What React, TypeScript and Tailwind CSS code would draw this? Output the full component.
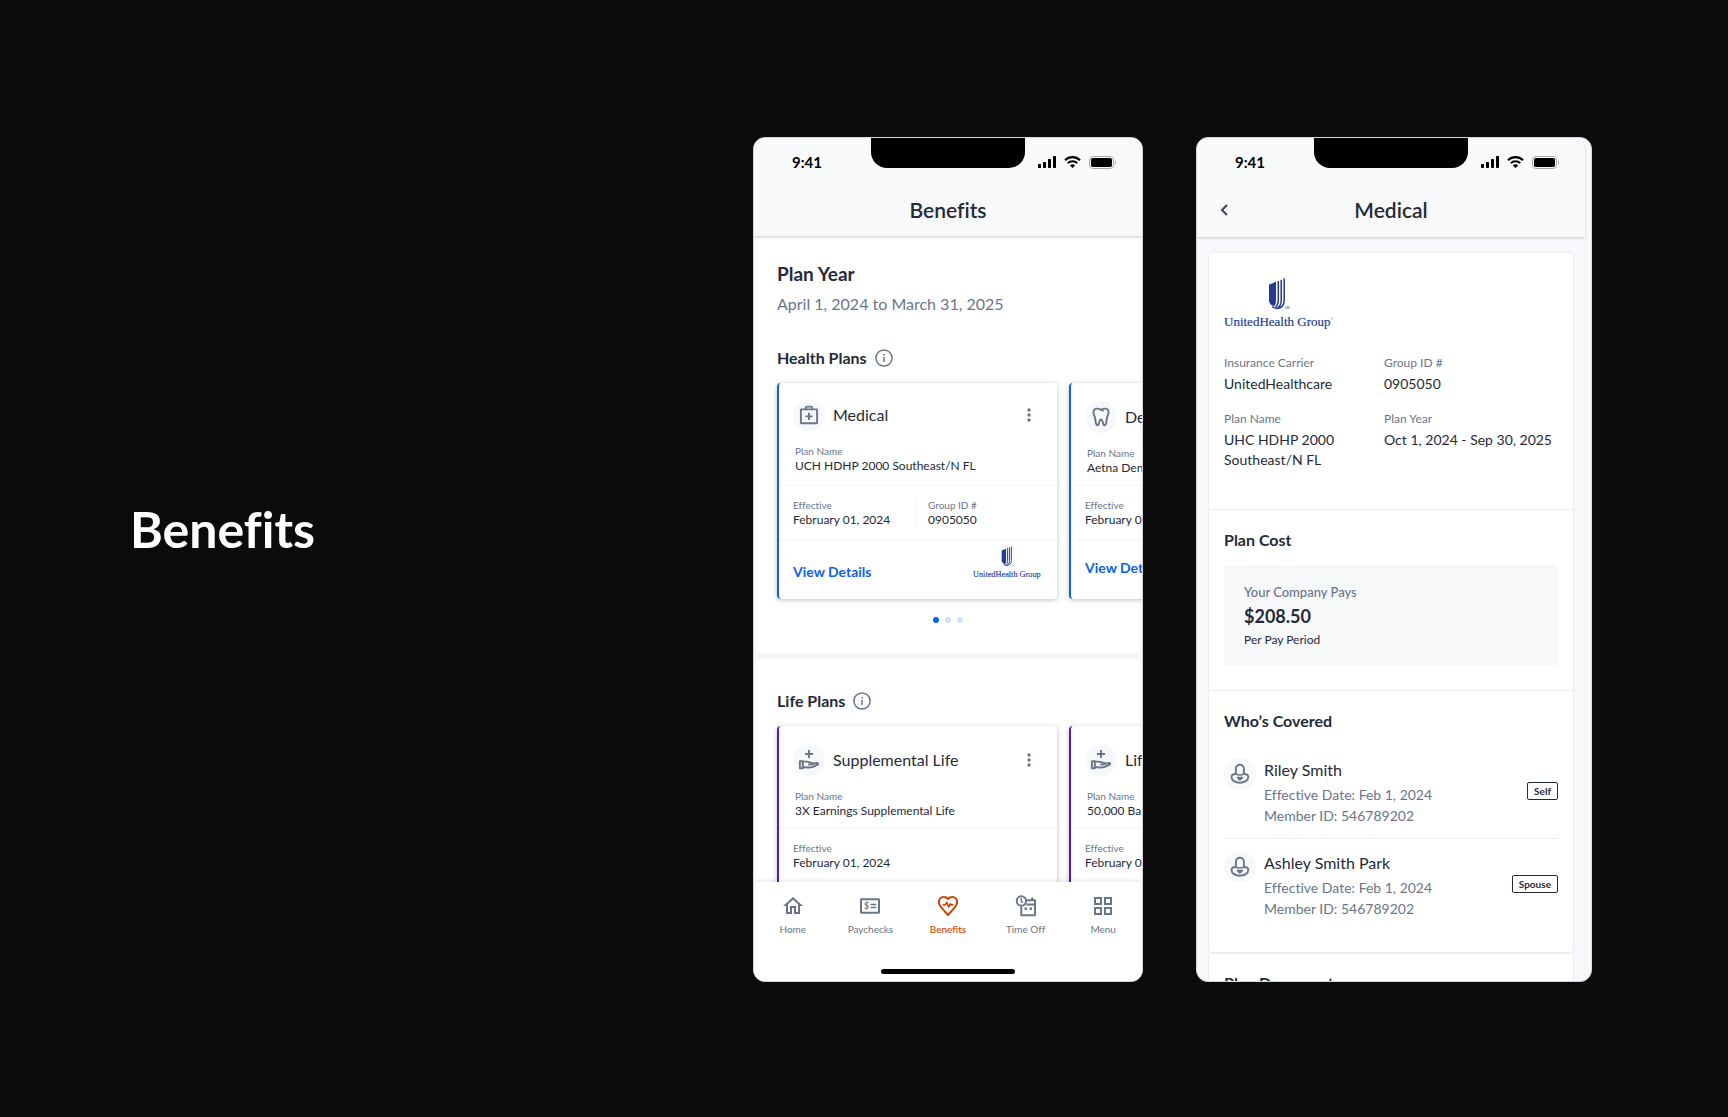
import type { ReactNode } from 'react';
import { MdMoreVert, MdOutlineGridView, MdOutlineHome } from 'react-icons/md';

type Plan = {
  title: string;
  planName: string;
  groupId?: string;
  icon: ReactNode;
  carrier?: boolean;
};

function MedicalIcon() {
  return (
    <svg className="w-6 h-6" viewBox="0 0 24 24" fill="none" stroke="currentColor" strokeWidth={1.9} strokeLinejoin="round">
      <rect x="3.9" y="6.4" width="16.2" height="13.8" rx="0.5" />
      <path d="M8.9 6.4V4.6a1 1 0 0 1 1-1h4.2a1 1 0 0 1 1 1v1.8M12 9.8v7.2M8.4 13.4h7.2" />
    </svg>
  );
}

function ToothIcon() {
  return (
    <svg className="w-6 h-6" viewBox="0 0 24 24" fill="none" stroke="currentColor" strokeWidth={1.9} strokeLinejoin="round">
      <path d="M12 4.8c-1.6-.9-3-1.3-4.4-1.200C5.400 3.800 4.300 5.500 4.500 8c.2 1.900 1.100 2.900 1.500 4.700.4 2 .4 4.200 1.100 6.200.4 1.100 1.300 1.700 2.100 1.100 1.100-.9.900-5.500 2.800-5.500s1.700 4.600 2.800 5.500c.8.6 1.700 0 2.100-1.100.7-2 .7-4.200 1.100-6.200.4-1.800 1.300-2.800 1.500-4.700.2-2.500-.9-4.200-3.100-4.400-1.400-.1-2.800.3-4.400 1.200Z" />
      <path d="M12 4.800c.8.600 1.500.9 2.300 1.100" strokeLinecap="round" strokeWidth={1.4} />
    </svg>
  );
}

function HandPlusIcon() {
  return (
    <svg className="w-6 h-6" viewBox="0 0 24 24" fill="none" stroke="currentColor" strokeWidth={1.9} strokeLinejoin="round">
      <path d="M12 2v8M8 6h8" />
      <path d="M2.9 13.3h2.9v6.9H2.900z" />
      <path d="M5.800 13.600h4.600c1 0 1.900.8 3 1h1.200c1.100 0 1.300 1.600.1 1.800l-3.500.2M15.200 16l4.200-1c1.800-.3 2.300 1.100.8 1.800-2 1-4 2.300-6.500 2.600-2.600.3-5-.1-7.900-.3" />
    </svg>
  );
}

function MemberIcon() {
  return (
    <svg className="w-6 h-6" viewBox="0 0 24 24" fill="none" stroke="currentColor" strokeWidth={1.9}>
      <path d="M7.900 12.400V6.800a4 4 0 0 1 8 0v5.600" />
      <path d="M7.900 12c1.200.7 2.500 1 4 1s2.800-.3 4-1" strokeWidth={1.5} />
      <path d="M8 12c-2.800.1-4.500 1-4.500 2.700 0 3.700 4 6.100 8.400 6.100s8.400-2.400 8.400-6.100c0-1.700-1.700-2.600-4.500-2.700" />
      <path d="m11.900 19-2.700-2.400c-1.400-1.500.9-3.200 2.700-1.500 1.800-1.700 4.100 0 2.700 1.500Z" fill="currentColor" stroke="none" />
    </svg>
  );
}

function InfoIcon() {
  return (
    <svg className="w-[18px] h-[18px] text-[#6b7589]" viewBox="0 0 18 18" fill="none" stroke="currentColor" strokeWidth={1.5}>
      <circle cx="9" cy="9" r="8.1" />
      <path d="M9 8v5M9 5v1.5" />
    </svg>
  );
}

function PaycheckIcon() {
  return (
    <svg className="w-6 h-6" viewBox="0 0 24 24" fill="none" stroke="currentColor" strokeWidth={2} strokeLinejoin="round">
      <rect x="3" y="5.2" width="18" height="13.6" rx="0.6" />
      <path d="M12.5 10.5h5.800M12.500 13.500h5.800" strokeWidth={1.7} />
      <text x="6" y="15" fontSize="8.5" fontWeight="700" fill="currentColor" stroke="none">$</text>
    </svg>
  );
}

function HeartPulseIcon() {
  return (
    <svg className="w-6 h-6" viewBox="0 0 24 24" fill="none" stroke="currentColor" strokeWidth={2} strokeLinejoin="round">
      <path d="M12 21 5.200 13.400C3.600 11.500 2.900 10 2.900 8c0-3 2-5.100 4.800-5.100 1.700 0 3.300.7 4.300 2 1-1.300 2.600-2 4.300-2 2.800 0 4.800 2.100 4.800 5.100 0 2-.7 3.500-2.300 5.400Z" />
      <path d="M6.800 10.900h2.300l1.600-2.400 2 4.400 1.500-3 .8 1h2.200" strokeWidth={1.7} />
    </svg>
  );
}

function TimeOffIcon() {
  return (
    <svg className="w-6 h-6" viewBox="0 0 24 24" fill="none" stroke="currentColor" strokeWidth={2} strokeLinejoin="round">
      <path d="M13 6.300h8v14.900H7.300v-8.400M12.300 10.600h8.700M18.200 3.600v2.700" />
      <circle cx="7.400" cy="7" r="4.700" />
      <path d="M7.200 4.300v2.900l1.900 1.600" strokeWidth={1.5} />
      <path d="M10.500 14.800h2.400M15.600 14.800H18" strokeWidth={2.4} />
    </svg>
  );
}

function CarrierLogo({ className }: { className: string }) {
  return (
    <svg className={className} viewBox="0 0 110 54" role="img" aria-label="UnitedHealth Group" fill="#233c93">
      <path d="M45 8.600 52 5.800V25c0 2.200-.6 3.700-1.600 5.100C47 29.300 45 27.500 45 24.500Z" />
      <path d="M54.300 4.900v19.600c0 3-.9 5-2.600 6.500M57.200 3.700v21c0 3.600-1.300 5.900-3.700 7.300M60.200 2.200v22.300c0 4.200-2.400 7.500-7.200 8-1.800-.2-3.300-.9-4.800-1.800" fill="none" stroke="#233c93" strokeWidth={1.5} />
      <text x="0" y="50" fontSize="13" fontFamily="Liberation Serif, serif" stroke="#233c93" strokeWidth={0.2}>UnitedHealth Group</text>
      <text x="61" y="33" fontSize="3" fontFamily="Liberation Sans, sans-serif">SM</text>
      <text x="107" y="44" fontSize="3" fontFamily="Liberation Sans, sans-serif">®</text>
    </svg>
  );
}

function StatusBar() {
  return (
    <div className="relative flex h-12 items-center justify-between pl-[38px] pr-[26px] text-black">
      <span className="text-[15px] leading-6 font-bold">9:41</span>
      <div className="absolute left-1/2 top-0 h-[30px] w-[154px] -translate-x-1/2 rounded-b-[16px] bg-black" />
      <div className="flex items-center gap-2">
        <svg className="w-[18px] h-3" viewBox="0 0 18 12" fill="currentColor">
          <rect x="0" y="8" width="3" height="4" rx="0.7" />
          <rect x="5" y="6" width="3" height="6" rx="0.7" />
          <rect x="10" y="3" width="3" height="9" rx="0.7" />
          <rect x="15" y="0" width="3" height="12" rx="0.7" />
        </svg>
        <svg className="w-[17px] h-3" viewBox="0 0 17 12" fill="none" stroke="currentColor">
          <path d="M1 4.200a10.700 10.700 0 0 1 15 0" strokeWidth={2.1} />
          <path d="M3.700 7.100a6.900 6.900 0 0 1 9.600 0" strokeWidth={2} />
          <path d="M8.500 12 5.900 9.400a3.800 3.800 0 0 1 5.200 0Z" fill="currentColor" stroke="none" />
        </svg>
        <svg className="w-[27px] h-[13px]" viewBox="0 0 27 13">
          <rect x="0.5" y="0.5" width="24" height="12" rx="3.3" fill="none" stroke="#a6a7a9" />
          <rect x="2" y="2" width="21" height="9" rx="1.8" />
          <path d="M26 4.500c1.300.6 1.300 3.400 0 4Z" fill="#a6a7a9" />
        </svg>
      </div>
    </div>
  );
}

function Field({ label, value }: { label: string; value: string }) {
  return (
    <div>
      <dt className="text-[10px] leading-[14px] text-[#6b7589]">{label}</dt>
      <dd className="text-xs leading-4 whitespace-nowrap">{value}</dd>
    </div>
  );
}

function PlanCard({ plan, accent }: { plan: Plan; accent: string }) {
  return (
    <article className={`w-[280px] shrink-0 rounded-[4px] border-l-2 bg-white shadow-[0_1px_5px_rgba(0,0,0,0.25)] ${accent}`}>
      <div className={`min-h-[103px] border-b border-[#f3f4f6] px-[14px] ${plan.carrier ? 'pt-4' : 'pt-[18px]'}`}>
        <div className="flex items-center">
          <span className="flex h-8 w-8 items-center justify-center rounded-full bg-[#f7f8fa] text-[#6b7589]">{plan.icon}</span>
          <h3 className="ml-2 flex-1 whitespace-nowrap text-base">{plan.title}</h3>
          <button type="button" aria-label={`${plan.title} options`} className="mr-1 text-[#6b7589]">
            <MdMoreVert size={20} />
          </button>
        </div>
        <dl className="mt-[13px] pl-[2px]">
          <Field label="Plan Name" value={plan.planName} />
        </dl>
      </div>
      <dl className="flex border-b border-[#f3f4f6] px-[14px] py-3">
        <div className="w-[123px]">
          <Field label="Effective" value="February 01, 2024" />
        </div>
        {plan.groupId && (
          <div className="border-l border-[#f3f4f6] pl-[11px]">
            <Field label="Group ID #" value={plan.groupId} />
          </div>
        )}
      </dl>
      <div className={`flex h-[58px] justify-between px-[14px] ${plan.carrier ? 'pt-1' : 'pb-1'}`}>
        <a href="#details" className="self-center whitespace-nowrap text-sm font-bold text-[#0b62e6]">View Details</a>
        {plan.carrier && <CarrierLogo className="w-[70px] self-start" />}
      </div>
    </article>
  );
}

function PlanSection({ title, plans, accent }: { title: string; plans: Plan[]; accent: string }) {
  return (
    <section>
      <h2 className="flex items-center gap-2 text-base font-bold">
        {title}
        <InfoIcon />
      </h2>
      <div className="mt-[13px] flex gap-3">
        {plans.map((plan) => (
          <PlanCard key={plan.title} plan={plan} accent={accent} />
        ))}
      </div>
    </section>
  );
}

const healthPlans: Plan[] = [
  { title: 'Medical', planName: 'UCH HDHP 2000 Southeast/N FL', groupId: '0905050', icon: <MedicalIcon />, carrier: true },
  { title: 'Dental', planName: 'Aetna Dental PPO', icon: <ToothIcon /> },
];

const lifePlans: Plan[] = [
  { title: 'Supplemental Life', planName: '3X Earnings Supplemental Life', icon: <HandPlusIcon /> },
  { title: 'Life', planName: '50,000 Basic Life', icon: <HandPlusIcon /> },
];

const tabs = [
  { label: 'Home', icon: <MdOutlineHome size={24} /> },
  { label: 'Paychecks', icon: <PaycheckIcon /> },
  { label: 'Benefits', icon: <HeartPulseIcon />, active: true },
  { label: 'Time Off', icon: <TimeOffIcon /> },
  { label: 'Menu', icon: <MdOutlineGridView size={24} /> },
];

function BenefitsScreen() {
  return (
    <div className="flex h-[845px] w-[390px] shrink-0 flex-col overflow-hidden rounded-xl border border-[#d4d6d8] bg-white">
      <header className="relative z-10 bg-[#f8f9fb] shadow-[0_1px_3px_rgba(0,0,0,0.2)]">
        <StatusBar />
        <h1 className="flex h-[50px] items-center justify-center pb-0.5 text-[21px] font-semibold">Benefits</h1>
      </header>

      <div className="min-h-0 flex-1 overflow-hidden">
        <div className="px-[23px] pt-6">
          <h2 className="text-[19px] leading-7 font-bold">Plan Year</h2>
          <p className="mt-1 mb-[30px] text-base text-[#6b7589]">April 1, 2024 to March 31, 2025</p>
          <PlanSection title="Health Plans" plans={healthPlans} accent="border-[#0b62e6]" />
        </div>
        <div className="mt-[18px] mb-[30px] flex justify-center gap-1.5">
          <span className="h-1.5 w-1.5 rounded-full bg-[#0b62e6]" />
          <span className="h-1.5 w-1.5 rounded-full bg-[#cfe0fb]" />
          <span className="h-1.5 w-1.5 rounded-full bg-[#cfe0fb]" />
        </div>
        <div className="border-t-[6px] border-[#f7f8fa] px-[23px] pt-[30px]">
          <PlanSection title="Life Plans" plans={lifePlans} accent="border-[#5c16c5]" />
        </div>
      </div>

      {/* Tab bar */}
      <nav className="relative bg-white shadow-[0_-1px_5px_rgba(0,0,0,0.12)]">
        <div className="flex pt-3">
          {tabs.map((tab) => (
            <a
              key={tab.label}
              href="#tab"
              className={`flex flex-1 flex-col items-center gap-1 text-[10px] leading-[14px] ${tab.active ? 'font-medium text-[#d24305]' : 'text-[#6b7589]'}`}
            >
              {tab.icon}
              {tab.label}
            </a>
          ))}
        </div>
        <div className="mx-auto mt-[33px] mb-[7px] h-[5px] w-[134px] rounded-full bg-black" />
      </nav>
    </div>
  );
}

function Detail({ label, children }: { label: string; children: ReactNode }) {
  return (
    <div>
      <dt className="text-xs leading-4 text-[#6b7589]">{label}</dt>
      <dd className="mt-[3px] text-sm leading-5">{children}</dd>
    </div>
  );
}

const members = [
  { name: 'Riley Smith', relation: 'Self' },
  { name: 'Ashley Smith Park', relation: 'Spouse' },
];

function MedicalScreen() {
  return (
    <div className="flex h-[845px] w-[396px] shrink-0 flex-col overflow-hidden rounded-xl border border-[#d4d6d8] bg-[#f7f8fb]">
      <header className="relative z-10 mr-[6px] rounded-tr-xl bg-[#f8f9fb] shadow-[0_1px_3px_rgba(0,0,0,0.2)]">
        <StatusBar />
        <div className="relative flex h-[51px] items-center justify-center pb-[3px]">
          <button type="button" aria-label="Back" className="absolute left-[18px] p-1 text-[#3c4353]">
            <svg className="w-3 h-3" viewBox="0 0 12 12" fill="none" stroke="currentColor" strokeWidth={2}>
              <path d="M8 1 3 6l5 5" />
            </svg>
          </button>
          <h1 className="text-[21px] font-semibold">Medical</h1>
        </div>
      </header>

      <div className="min-h-0 flex-1 overflow-hidden pt-[15px] pr-[17px] pl-[11px]">
        <div className="rounded-[4px] border border-[#eceef0] bg-white">
          <section className="px-[15px] pt-[23px] pb-[39px]">
            <CarrierLogo className="w-[110px]" />
            <dl className="mt-[25px] grid grid-cols-[144px_1fr] gap-x-4 gap-y-[17px]">
              <Detail label="Insurance Carrier">UnitedHealthcare</Detail>
              <Detail label="Group ID #">0905050</Detail>
              <Detail label="Plan Name">UHC HDHP 2000 Southeast/N FL</Detail>
              <Detail label="Plan Year">Oct 1, 2024 - Sep 30, 2025</Detail>
            </dl>
          </section>

          <section className="border-y border-[#eceef0] px-[15px] pt-[18px] pb-6">
            <h2 className="text-base font-bold">Plan Cost</h2>
            <div className="mt-[13px] rounded-[4px] bg-[#f7f8fa] px-5 pt-[19px] pb-[18px] text-xs leading-4">
              <p className="text-[13px] leading-4 font-medium text-[#6b7589]">Your Company Pays</p>
              <p className="my-1 text-lg leading-6 font-bold">$208.50</p>
              <p>Per Pay Period</p>
            </div>
          </section>

          <section className="px-[15px] pt-[18px] pb-[21px]">
            <h2 className="text-base font-bold">Who’s Covered</h2>
            <ul className="mt-[13px] divide-y divide-[#eceef0]">
              {members.map((member) => (
                <li key={member.name} className="flex pt-3 pb-3">
                  <span className="flex h-8 w-8 items-center justify-center rounded-full bg-[#f7f8fa] text-[#6b7589]">
                    <MemberIcon />
                  </span>
                  <div className="ml-2 flex-1">
                    <h3 className="mb-[2px] text-base">{member.name}</h3>
                    <p className="text-sm leading-[21px] text-[#6b7589]">Effective Date: Feb 1, 2024</p>
                    <p className="text-sm leading-[21px] text-[#6b7589]">Member ID: 546789202</p>
                  </div>
                  <span className="mt-6 self-start rounded-[2px] border border-[#252a37] px-1.5 text-[10px] leading-4 font-bold">
                    {member.relation}
                  </span>
                </li>
              ))}
            </ul>
          </section>
        </div>

        <section className="border border-[#eceef0] bg-white px-[15px] pt-[17px]">
          <h2 className="text-base font-bold">Plan Documents</h2>
        </section>
      </div>
    </div>
  );
}

export default function App() {
  return (
    <main className="flex min-h-screen items-center justify-between gap-12 bg-[#0b0b0b] pt-0.5 pl-[130px] pr-[136px] font-[Lato,sans-serif] text-[#252a37] [font-variant-ligatures:none]">
      <p className="pb-[62px] text-[50px] leading-none font-bold text-white">Benefits</p>
      <div className="flex gap-[53px]">
        <BenefitsScreen />
        <MedicalScreen />
      </div>
    </main>
  );
}
